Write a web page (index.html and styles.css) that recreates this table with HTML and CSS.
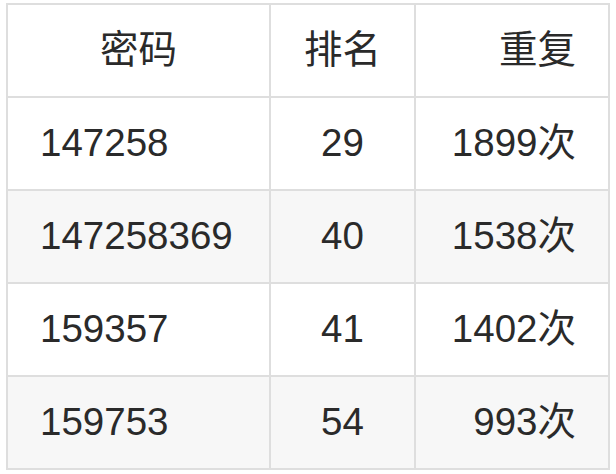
FILE: index.html
```html
<!DOCTYPE html>
<html lang="zh">
<head>
<meta charset="utf-8">
<link rel="stylesheet" href="styles.css">
</head>
<body>
<table class="pw-table">
  <colgroup>
    <col class="c1"><col class="c2"><col class="c3">
  </colgroup>
  <thead>
    <tr><th class="center">密码</th><th class="center">排名</th><th class="right">重复</th></tr>
  </thead>
  <tbody>
    <tr><td class="left">147258</td><td class="center">29</td><td class="right">1899次</td></tr>
    <tr><td class="left">147258369</td><td class="center">40</td><td class="right">1538次</td></tr>
    <tr><td class="left">159357</td><td class="center">41</td><td class="right">1402次</td></tr>
    <tr><td class="left">159753</td><td class="center">54</td><td class="right">993次</td></tr>
  </tbody>
</table>
</body>
</html>
```

FILE: styles.css
```css
html, body {
  margin: 0;
  background: #ffffff;
}
body {
  padding: 3px 0 0 6px;
}
.pw-table {
  border-collapse: collapse;
  table-layout: fixed;
  width: 602px;
  font-family: "Liberation Sans", "Noto Sans CJK SC", sans-serif;
  font-size: 38.5px;
  color: #2a2a2a;
}
.c1 { width: 263px; }
.c2 { width: 145px; }
.c3 { width: 194px; }
.pw-table th,
.pw-table td {
  border: 2px solid #dedede;
  height: 91px;
  padding: 0 32px;
  font-weight: normal;
  vertical-align: middle;
  line-height: 1;
}
.pw-table tbody tr:nth-child(even) {
  background: #f7f7f7;
}
.left { text-align: left; }
.center { text-align: center; }
.right { text-align: right; }
```
